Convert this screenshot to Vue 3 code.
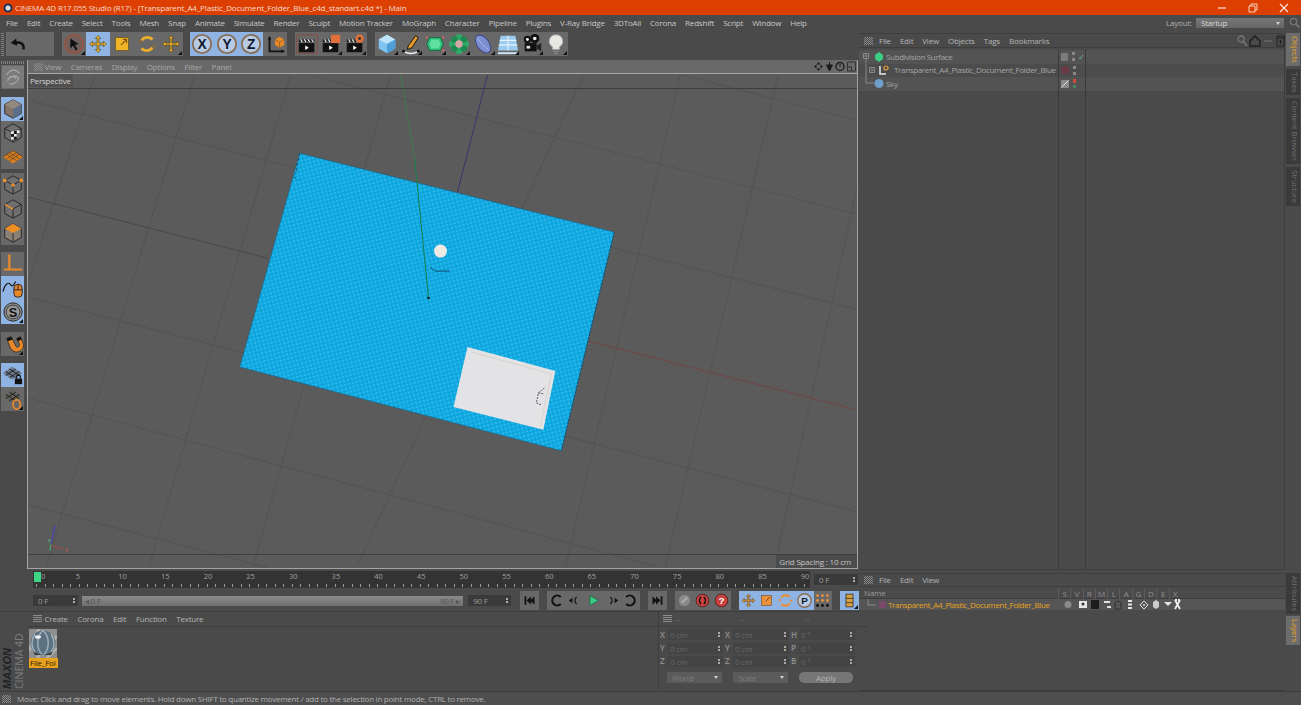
<script setup>
const menus = ['File', 'Edit', 'Create', 'Select', 'Tools', 'Mesh', 'Snap', 'Animate', 'Simulate', 'Render', 'Sculpt', 'Motion Tracker', 'MoGraph', 'Character', 'Pipeline', 'Plugins', 'V-Ray Bridge', '3DToAll', 'Corona', 'Redshift', 'Script', 'Window', 'Help']

const cross = '<path d="M12 3l3 3h-2v5h5V9l3 3-3 3v-2h-5v5h2l-3 3-3-3h2v-5H6v2l-3-3 3-3v2h5V6H9z" fill="#f0b429" stroke="#5a4a20" stroke-width=".8"/>'
const axisBtn = (l) => `<circle cx="12" cy="12" r="10" fill="#b7cbe6" stroke="#8a6f55" stroke-width="2"/><text x="12" y="17" text-anchor="middle" font-family="Liberation Sans" font-weight="700" font-size="15" fill="#10182c">${l}</text>`
const clap = (extra = '') => `<rect x="3" y="11" width="17" height="10" fill="#111"/><path d="M3 7h17v3H3z" fill="#222"/><path d="M5 7l2 3M9 7l2 3M13 7l2 3M17 7l2 3" stroke="#eee" stroke-width="1.2"/><path d="M10 13.5l4 2.5-4 2.5z" fill="#fff"/>${extra}`

const topGroups = [
  { tools: [
    { art: '<path d="M18 18c1-6-3-9-10-7" fill="none" stroke="#111" stroke-width="2.6"/><path d="M10 6l-6 5 7 3z" fill="#111"/>' },
    { art: '' }
  ] },
  { tools: [
    { art: '<circle cx="12" cy="12" r="10" fill="#6b6160" stroke="#a0503e" stroke-width="1.6"/><circle cx="12" cy="12" r="7.500" fill="none" stroke="#8a5a4c"/><path d="M8 6l9 6-4 1 3 5-2 1-3-5-3 3z" fill="#111"/>', corner: true },
    { art: cross, on: true },
    { art: '<rect x="5" y="5" width="14" height="14" fill="#f0b429" stroke="#6a5520" stroke-width=".8"/><path d="M11 13l6-6M13 7h4v4" stroke="#805a10" fill="none" stroke-width="1.4"/>' },
    { art: '<path d="M6 8a8 8 0 0 1 12-1M18 16a8 8 0 0 1-12 1" fill="none" stroke="#e8b028" stroke-width="3"/><path d="M4 12a8 8 0 0 1 1-5M20 12a8 8 0 0 1-1 5" fill="none" stroke="#8a6a30" stroke-width="1.4"/>' },
    { art: cross, corner: true }
  ] },
  { tools: [
    { art: axisBtn('X'), on: true },
    { art: axisBtn('Y'), on: true },
    { art: axisBtn('Z'), on: true },
    { art: '<path d="M6 6v14h14" fill="none" stroke="#111" stroke-width="2"/><path d="M6 3l2 4H4zM23 20l-4 2v-4z" fill="#111"/><path d="M12 7l5-3 5 3v6l-5 3-5-3z" fill="#e58a2a"/><path d="M12 7l5 3 5-3M17 10v6" stroke="#9a5512" fill="none" stroke-width=".8"/>' }
  ] },
  { tools: [
    { art: '<rect x="1" y="2" width="22" height="20" fill="none" stroke="#8a4a40"/>' + clap() },
    { art: clap('<rect x="12" y="2" width="10" height="9" fill="#e2703a"/>'), corner: true },
    { art: clap('<circle cx="17" cy="6" r="4.5" fill="#e2703a"/><circle cx="17" cy="6" r="1.6" fill="#333"/>'), corner: true }
  ] },
  { tools: [
    { art: '<path d="M12 2l9 5v10l-9 5-9-5V7z" fill="#7fc4f0"/><path d="M3 7l9 5 9-5-9-5z" fill="#bfe4fa"/><path d="M12 12v10l9-5V7z" fill="#4f9fdb"/>', corner: true },
    { art: '<path d="M4 20c5 3 11 3 16 0" fill="none" stroke="#eee" stroke-width="1.8"/><path d="M9 14l8-11 3 2-7 11-5 2z" fill="#e59a2a" stroke="#111" stroke-width="1"/><circle cx="4" cy="20" r="1.6" fill="#111"/><circle cx="20" cy="20" r="1.6" fill="#111"/>', corner: true },
    { art: '<path d="M6 5h12l3 7-3 7H6l-3-7z" fill="#2fc27a" stroke="#14613c"/><path d="M8 7h8l2 5-2 5H8l-2-5z" fill="#5fe0a0"/><circle cx="3" cy="5" r="1.2" fill="#e66"/><circle cx="21" cy="5" r="1.2" fill="#e66"/><circle cx="21" cy="19" r="1.2" fill="#e66"/>', corner: true },
    { art: '<circle cx="12" cy="5" r="4" fill="#32a868"/><circle cx="12" cy="19" r="4" fill="#32a868"/><circle cx="5" cy="12" r="4" fill="#32a868"/><circle cx="19" cy="12" r="4" fill="#32a868"/><circle cx="7" cy="7" r="3.5" fill="#1f8a50"/><circle cx="17" cy="7" r="3.5" fill="#1f8a50"/><circle cx="7" cy="17" r="3.5" fill="#1f8a50"/><circle cx="17" cy="17" r="3.5" fill="#1f8a50"/><circle cx="12" cy="12" r="4" fill="#d7a8a8"/>', corner: true },
    { art: '<ellipse cx="12" cy="12" rx="6.5" ry="11" transform="rotate(-35 12 12)" fill="#7d8fd0" stroke="#3a4784"/><path d="M6 5c3 6 7 10 13 14" fill="none" stroke="#aab6e6"/>', corner: true },
    { art: '<path d="M4 3h16l3 16H1z" fill="#9ccbf0"/><path d="M1 21h22v2H1z" fill="#cfe6fa"/><path d="M12 3v16M3 8h18M2 13h20" stroke="#e8f4fd" stroke-width="1.2"/>', corner: true },
    { art: '<rect x="4" y="11" width="13" height="9" fill="#111"/><path d="M17 14l5-3v9l-5-3z" fill="#222"/><circle cx="7" cy="7" r="4" fill="#111"/><circle cx="15" cy="6" r="5" fill="#111"/><circle cx="7" cy="7" r="1.6" fill="#eee"/><circle cx="15" cy="6" r="2" fill="#eee"/><rect x="6" y="14" width="4" height="3" fill="#ddd"/>', corner: true },
    { art: '<path d="M12 2a7 7 0 0 1 4 13v3H8v-3A7 7 0 0 1 12 2z" fill="#e8e8e2" stroke="#999"/><path d="M9 19h6v1.5H9zM10 21.5h4V23h-4z" fill="#888"/>', corner: true }
  ] }
]

const greyCube = '<path d="M12 2l9 5v10l-9 5-9-5V7z" fill="#6f6f6f" stroke="#222"/><path d="M3 7l9 5 9-5M12 12v10" fill="none" stroke="#222"/>'
const sideGroups = [
  { gap: 0, tools: [{ art: '<rect x="0" y="0" width="24" height="24" fill="#7b7b7b"/><path d="M5 10c4-7 10-7 14-2M6 16c2-5 8-7 12-3-1 5-6 8-10 6M9 13c2-2 5-2 6 1" fill="none" stroke="#a8a8a8" stroke-width="1.3"/>' }] },
  { gap: 8, tools: [
    { art: '<path d="M12 2l9 5v10l-9 5-9-5V7z" fill="#857568" stroke="#222"/><path d="M3 7l9 5 9-5-9-5z" fill="#94897d"/><path d="M12 12v10l9-5V7z" fill="#5d6f88"/>', on: true, corner: true },
    { art: greyCube + '<path d="M10 10h3v3h-3zM13 13h3v3h-3zM10 16h3v3h-3zM16 9h3v3h-3z" fill="#eee"/><path d="M13 10h3v3h-3zM10 13h3v3h-3zM13 16h3v3h-3z" fill="#111"/>' },
    { art: '<path d="M1 12l11-7 11 7-11 7z" fill="#d97e20"/><path d="M5 9l11 7M8 7l11 7M12 5l11 7M19 9L8 16M16 7L5 14M12 5L1 12" stroke="#5c4020" stroke-width=".8"/>' }
  ] },
  { gap: 4, tools: [
    { art: greyCube + '<circle cx="3" cy="7" r="2" fill="#e8932e"/><circle cx="21" cy="7" r="2" fill="#e8932e"/><circle cx="12" cy="12" r="2" fill="#e8932e"/>' },
    { art: greyCube + '<path d="M3 7l9 5" stroke="#e8932e" stroke-width="1.6"/>' },
    { art: '<path d="M12 2l9 5v10l-9 5-9-5V7z" fill="#8a8074" stroke="#222"/><path d="M3 7l9 5 9-5-9-5z" fill="#ee8f24"/><path d="M12 12v10" stroke="#222"/>' }
  ] },
  { gap: 7, tools: [
    { art: '<path d="M8 2v16h14M2 18h6" fill="none" stroke="#e8882a" stroke-width="2.4"/><path d="M8 1l2 3H6z" fill="#e8882a"/>' },
    { art: '<rect x="13" y="8" width="9" height="14" rx="4" fill="#e8882a" stroke="#222"/><path d="M17.5 8v6M13 14h9" stroke="#222"/><path d="M1 16C3 8 7 5 9 8s3 2 6-3" fill="none" stroke="#111" stroke-width="1.2"/>', on: true },
    { art: '<circle cx="12" cy="12" r="10" fill="#8b8b8b" stroke="#222"/><circle cx="12" cy="12" r="7.5" fill="#9a9a9a" stroke="#333"/><text x="12" y="17" text-anchor="middle" font-family="Liberation Sans" font-weight="700" font-size="14" fill="#111">S</text>', on: true, corner: true }
  ] },
  { gap: 8, tools: [{ art: '<path d="M5 6l5-2 5 10c1 3 5 1 4-2l-3-6 4-2 3 7c3 9-10 14-14 5z" fill="#e8882a" stroke="#222" stroke-width=".8"/><path d="M5 6l5-2 1.500 3-5 2zM16 6l4-2 1.300 3-4 2z" fill="#111"/>', corner: true }] },
  { gap: 7, tools: [
    { art: '<path d="M1 10l10-7 11 7-11 7z" fill="#6f7a8e"/><path d="M4 8l11 7M8 5.500l11 7M15 5.500L4 12.500M19 8L8 15" stroke="#111" stroke-width=".9"/><rect x="14" y="16" width="8" height="6" fill="#111"/><path d="M16 16v-2a2 2 0 0 1 4 0v2" fill="none" stroke="#111" stroke-width="1.4"/>', on: true },
    { art: '<path d="M1 9l10-7 11 7-11 7z" fill="#65625c"/><path d="M4 7l11 7M8 4.500l11 7M15 4.500L4 11.500M19 7L8 14" stroke="#111" stroke-width=".9"/><ellipse cx="16" cy="18" rx="4" ry="5" fill="none" stroke="#e8882a" stroke-width="2"/>', corner: true }
  ] }
]

const rulerLabels = Array.from({ length: 19 }, (_, i) => i * 5)

const transport = [
  { tools: [{ art: '<path d="M5 6h2.500v12H5zM19 6v12l-6-6zM14 6v12l-6-6z" fill="#111"/>' }] },
  { tools: [
    { art: '<path d="M18 7a7 7 0 1 0 0 10" fill="none" stroke="#111" stroke-width="3"/>' },
    { art: '<path d="M9 8v8l-5-4z" fill="#111"/><path d="M15 7c-3 3-3 7 0 10" fill="none" stroke="#111" stroke-width="1.600"/>' },
    { art: '<path d="M7 5l12 7-12 7z" fill="#38c983" stroke="#14613c"/>' },
    { art: '<path d="M15 8v8l5-4z" fill="#111"/><path d="M9 7c3 3 3 7 0 10" fill="none" stroke="#111" stroke-width="1.600"/>' },
    { art: '<path d="M6 7a7 7 0 1 1 0 10" fill="none" stroke="#111" stroke-width="3"/>' }
  ] },
  { tools: [{ art: '<path d="M19 6h-2.500v12H19zM5 6v12l6-6zM10 6v12l6-6z" fill="#111"/>' }] },
  { tools: [
    { art: '<circle cx="12" cy="12" r="8" fill="#8a8a8a"/><path d="M8 15l8-7" stroke="#aaa" stroke-width="3"/>' },
    { art: '<circle cx="12" cy="12" r="9" fill="#c8413f" stroke="#401010"/><path d="M10 7c-3 3-3 7 0 10M14 7c3 3 3 7 0 10" fill="none" stroke="#111" stroke-width="2"/>' },
    { art: '<circle cx="12" cy="12" r="9" fill="#c8413f" stroke="#401010"/><text x="12" y="17" text-anchor="middle" font-family="Liberation Sans" font-weight="700" font-size="14" fill="#fff">?</text>' }
  ] },
  { tools: [
    { art: cross.replaceAll('#f0b429', '#e8903a'), on: true },
    { art: '<rect x="5" y="5" width="14" height="14" fill="#e8903a" stroke="#6a4520" stroke-width=".8"/><path d="M11 13l6-6" stroke="#7a4a10" stroke-width="1.400"/>', on: true },
    { art: '<path d="M6 8a8 8 0 0 1 12-1M18 16a8 8 0 0 1-12 1M4 13a8 8 0 0 1 0-3M20 11a8 8 0 0 1 0 3" fill="none" stroke="#e8903a" stroke-width="3"/>', on: true },
    { art: '<circle cx="12" cy="12" r="9.500" fill="#b7cbe6" stroke="#8a6f55" stroke-width="2"/><text x="12" y="17" text-anchor="middle" font-family="Liberation Sans" font-weight="700" font-size="14" fill="#10182c">P</text>', on: true },
    { art: '<g fill="#e8903a"><circle cx="5" cy="5" r="2"/><circle cx="12" cy="5" r="2"/><circle cx="19" cy="5" r="2"/><circle cx="5" cy="12" r="2"/><circle cx="12" cy="12" r="2"/><circle cx="19" cy="12" r="2"/></g><g fill="#111"><circle cx="5" cy="19" r="2"/><circle cx="12" cy="19" r="2"/><circle cx="19" cy="19" r="2"/></g>' }
  ] },
  { tools: [{ art: '<rect x="7" y="3" width="10" height="18" fill="#d9a040" stroke="#222"/><path d="M7 9h10M7 15h10" stroke="#222"/>', on: true, corner: true }] }
]

const coordRows = [
  { a: 'X', b: 'X', c: 'H', d: '0 °' },
  { a: 'Y', b: 'Y', c: 'P', d: '0 °' },
  { a: 'Z', b: 'Z', c: 'B', d: '0 °' }
]

const layerCols = ['S', 'V', 'R', 'M', 'L', 'A', 'G', 'D', 'E', 'X']

// floor grid in page coordinates
const gridLines = [
  'M310 75L857 214', 'M683 75L857 120', 'M27 100L860 310', 'M27 297L857 512', 'M27 398L657 567', 'M27 505L267 568',
  'M94 75L27 283', 'M194 75L45 568', 'M290 75L148 568', 'M390 75L252 568', 'M583 75L357 565', 'M680 75L565 568',
  'M778 75L665 568', 'M857 187L777 555'
]
</script>

<template>
  <div class="app">
    <header class="titlebar">
      <svg class="logo" viewBox="0 0 12 12"><circle cx="6" cy="6" r="5.500" fill="#27364f" /><circle cx="6" cy="6" r="3" fill="#d7dde6" /></svg>
      <span class="title">CINEMA 4D R17.055 Studio (R17) - [Transparent_A4_Plastic_Document_Folder_Blue_c4d_standart.c4d *] - Main</span>
      <div class="winctl">
        <svg viewBox="0 0 10 10"><path d="M1 5h8" stroke="#f6d5c5" stroke-width="1.300" /></svg>
        <svg viewBox="0 0 10 10"><path d="M1 3h6v6H1zM3 3V1h6v6H7" fill="none" stroke="#f6d5c5" /></svg>
        <svg viewBox="0 0 10 10"><path d="M1 1l8 8M9 1l-8 8" stroke="#f6e5dc" stroke-width="1.200" /></svg>
      </div>
    </header>

    <nav class="menubar">
      <span v-for="m in menus" :key="m">{{ m }}</span>
      <div class="layout">
        <span>Layout:</span>
        <div class="layout-select">Startup<i class="caret"></i></div>
        <svg viewBox="0 0 12 12"><circle cx="5" cy="5" r="3.500" fill="none" stroke="#777" stroke-width="1.400" /><path d="M7.500 7.500l4 4" stroke="#777" stroke-width="2" /></svg>
      </div>
    </nav>

    <div class="main">
      <div class="left">
        <div class="toptools">
          <div v-for="(g, gi) in topGroups" :key="gi" class="group">
            <div v-for="(t, ti) in g.tools" :key="ti" class="tool" :class="{ on: t.on, corner: t.corner }">
              <svg viewBox="0 0 24 24" v-html="t.art"></svg>
            </div>
          </div>
        </div>

        <div class="work">
          <aside class="sidetools">
            <div v-for="(g, gi) in sideGroups" :key="gi" class="sgroup" :style="{ marginTop: g.gap + 'px' }">
              <div v-for="(t, ti) in g.tools" :key="ti" class="tool stool" :class="{ on: t.on, corner: t.corner }">
                <svg viewBox="0 0 24 24" v-html="t.art"></svg>
              </div>
            </div>
          </aside>

          <section class="viewport">
            <div class="vp-menu">
              <i class="dots"></i>
              <span>View</span><span>Cameras</span><span>Display</span><span>Options</span><span>Filter</span><span>Panel</span>
              <svg class="vp-nav" viewBox="0 0 44 11">
                <path d="M5.500 1l2 2.500h-4zM5.500 10l2-2.500h-4zM1 5.500l2.500-2v4zM10 5.500l-2.500-2v4z" fill="#1c1c1c" />
                <path d="M16.500 1v9M13.500 4h6l-3 6z" stroke="#1c1c1c" fill="#1c1c1c" />
                <circle cx="27" cy="5.500" r="4" fill="none" stroke="#1c1c1c" stroke-width="1.300" /><path d="M27 3v3" stroke="#1c1c1c" />
                <path d="M34.500 1h8v9h-8zM34.500 6h4v4" fill="none" stroke="#333" />
              </svg>
            </div>
            <div class="scene">
              <svg class="scene-svg" viewBox="27 74 830 494">
                <defs>
                  <pattern id="weave" width="4" height="4" patternUnits="userSpaceOnUse" patternTransform="rotate(-15)">
                    <rect width="4" height="4" fill="#0fa9e2" />
                    <circle cx="1" cy="1" r="0.900" fill="#3bbcea" />
                    <circle cx="3" cy="3" r="0.900" fill="#0b9fd8" />
                  </pattern>
                </defs>
                <path v-for="(d, i) in gridLines" :key="i" :d="d" class="gridline" />
                <path d="M27 197L267 258" class="axis-x" />
                <path d="M588 341L857 410" class="axis-red" />
                <path d="M400 75L414 158" class="axis-green" />
                <path d="M487 75L457 192" class="axis-blue" />
                <polygon points="299,153 614,232 561,451 239,367" fill="url(#weave)" stroke="#1b5f80" stroke-width="0.600" />
                <path d="M414 158L428 298" class="axis-green thin" />
                <circle cx="428" cy="298" r="1.200" fill="#111" />
                <path d="M430 267c2 3 6 5 10 4l9 0" fill="none" stroke="#154a6a" />
                <circle cx="440" cy="251" r="6.500" fill="#efe9e3" />
                <polygon points="467,347 555,371 543,430 453,407" fill="#e3e3e5" />
                <path d="M471 352L551 374L540 426" fill="none" stroke="#d8d2cc" />
                <path d="M544 388l-6 5l-2 10l5 2M538 393l5 1" fill="none" stroke="#3c3c58" stroke-width="0.800" stroke-dasharray="2 1" />
                <path d="M299 153l-4 21M293 177l5 3" stroke="#1c3a4a" fill="none" stroke-width="0.700" stroke-dasharray="3 2" />
                <path d="M614 232L561 451" stroke="#1b4a66" fill="none" stroke-dasharray="2 1.500" />
                <path d="M54 526L50 544" stroke="#4b45a8" stroke-width="1.400" />
                <path d="M50 544L49 551" stroke="#3fae68" stroke-width="1.200" />
                <path d="M50 546L62 549" stroke="#a24a44" stroke-width="1.200" />
                <text x="47" y="543" class="gizmo g">Y</text>
                <text x="64" y="552" class="gizmo r">X</text>
              </svg>
              <div class="persp"><span>Perspective</span></div>
              <div class="vp-foot"><span class="grid-spacing">Grid Spacing : 10 cm</span></div>
            </div>
          </section>
        </div>

        <div class="ruler">
          <i class="playhead"></i>
          <div class="ruler-track">
            <span v-for="n in rulerLabels" :key="n" class="rlabel">{{ n }}</span>
            <div class="ticks"></div>
          </div>
          <div class="field f-end">0 F<i class="spin"></i></div>
        </div>

        <div class="transport">
          <div class="field f-start">0 F<i class="spin"></i></div>
          <div class="slider"><span>◂ 0 F</span><span>90 F ▸</span></div>
          <div class="field f-stop">90 F<i class="spin"></i></div>
          <div class="tgroups">
            <div v-for="(g, gi) in transport" :key="gi" class="group tg">
              <div v-for="(t, ti) in g.tools" :key="ti" class="tool ttool" :class="{ on: t.on, corner: t.corner }">
                <svg viewBox="0 0 24 24" v-html="t.art"></svg>
              </div>
            </div>
          </div>
        </div>

        <div class="bottom">
          <div class="brand"><b>MAXON</b><span>CINEMA 4D</span></div>
          <div class="materials">
            <div class="pane-menu">
              <i class="lines"></i>
              <span>Create</span><span>Corona</span><span>Edit</span><span>Function</span><span>Texture</span>
            </div>
            <div class="mat">
              <svg viewBox="0 0 28 29">
                <rect width="28" height="29" fill="#8f8f8d" />
                <path d="M0 22l10-22M8 29l20-22M18 29l10-10" stroke="#b0b0ae" stroke-width="3" />
                <circle cx="14" cy="14" r="12.500" fill="#5d7280" />
                <path d="M14 1.500c-7 6-7 19 0 25M14 1.500c7 6 7 19 0 25M6 5c-4 6-4 13 0 18M22 5c4 6 4 13 0 18" fill="none" stroke="#9fb2bd" stroke-width="1.400" />
                <ellipse cx="9" cy="8" rx="3" ry="1.800" fill="#eef3f6" />
                <path d="M4 22c6 5 14 5 20 0l-2 4H6z" fill="#33393e" />
              </svg>
              <span class="mat-name">File_Fol</span>
            </div>
          </div>
          <div class="coords">
            <div class="coord-head"><i class="lines"></i><span>--</span><span>--</span><span>--</span></div>
            <div v-for="r in coordRows" :key="r.a" class="coord-row">
              <b>{{ r.a }}</b><div class="cf">0 cm<i class="spin"></i></div>
              <b>{{ r.b }}</b><div class="cf">0 cm<i class="spin"></i></div>
              <b>{{ r.c }}</b><div class="cf">{{ r.d }}<i class="spin"></i></div>
            </div>
            <div class="coord-actions">
              <div class="dd">World<i class="caret"></i></div>
              <div class="dd">Scale<i class="caret"></i></div>
              <div class="apply">Apply</div>
            </div>
          </div>
        </div>
      </div>

      <div class="right">
        <div class="obj-panel">
          <div class="pane-menu obj-menu">
            <i class="dots"></i>
            <span>File</span><span>Edit</span><span>View</span><span>Objects</span><span>Tags</span><span>Bookmarks</span>
            <svg class="obj-nav" viewBox="0 0 48 12">
              <circle cx="4" cy="4" r="3" fill="none" stroke="#777" stroke-width="1.300" /><path d="M6 6l4 5" stroke="#777" stroke-width="1.600" />
              <path d="M13 6l5-5 5 5v5h-10z" fill="none" stroke="#222" stroke-width="1.600" />
              <path d="M27 6h8" stroke="#666" stroke-width="1.500" />
              <path d="M40 1h7v10h-7zM40 3h7M43.500 5v4M42 7h3" fill="none" stroke="#222" />
            </svg>
          </div>
          <div class="obj-row">
            <div class="oname">
              <svg class="tree" viewBox="0 0 24 13"><path d="M3.500 3.500h5v5h-5zM4.500 6h3M6 4.500v3" fill="none" stroke="#8a8a8a" /><path d="M6 9v4" stroke="#8a8a8a" /><path d="M19 2l4 3v4l-4 3-4-3V5z" fill="#3bcf86" /></svg>
              <span>Subdivision Surface</span>
            </div>
            <div class="oflags"><i class="chip"></i><i class="vdots"></i><em>✓</em></div>
            <div class="otags"></div>
          </div>
          <div class="obj-row alt">
            <div class="oname">
              <svg class="tree wide" viewBox="0 0 32 13"><path d="M6 0v13" stroke="#8a8a8a" /><path d="M9.500 3.500h5v5h-5zM10.500 6h3M12 4.500v3" fill="none" stroke="#8a8a8a" /><path d="M20 2v8h6" fill="none" stroke="#e8e8e8" stroke-width="1.500" /><circle cx="26" cy="4" r="2" fill="none" stroke="#e8a040" stroke-width="1.200" /></svg>
              <span>Transparent_A4_Plastic_Document_Folder_Blue</span>
            </div>
            <div class="oflags"><i class="chip red"></i><i class="vdots"></i></div>
            <div class="otags"></div>
          </div>
          <div class="obj-row">
            <div class="oname">
              <svg class="tree" viewBox="0 0 24 13"><path d="M6 0v6h8" fill="none" stroke="#8a8a8a" /><circle cx="19" cy="6.500" r="4.500" fill="#6f9fc8" /></svg>
              <span>Sky</span>
            </div>
            <div class="oflags"><i class="chip slash"></i><i class="vdots redtop"></i></div>
            <div class="otags"></div>
          </div>
          <div class="obj-fill"><div></div><div></div><div></div></div>
        </div>

        <div class="layer-panel">
          <div class="pane-menu layer-menu">
            <i class="dots"></i>
            <span>File</span><span>Edit</span><span>View</span>
          </div>
          <div class="layer-head">
            <span class="lname">Name</span>
            <span v-for="c in layerCols" :key="c" class="lcol">{{ c }}</span>
          </div>
          <div class="layer-row">
            <div class="lname ltext">
              <svg viewBox="0 0 24 11"><path d="M4 0v6h8" fill="none" stroke="#8a8a8a" /><rect x="15" y="2" width="7" height="7" fill="#7b4a6a" /></svg>
              <span>Transparent_A4_Plastic_Document_Folder_Blue</span>
            </div>
            <svg class="layer-icons" viewBox="0 0 120 11">
              <circle cx="7" cy="5.500" r="3.500" fill="#8a8a8a" />
              <rect x="18" y="2" width="8" height="7" fill="#e8e8e8" /><circle cx="22" cy="5" r="1.500" fill="#333" />
              <rect x="30" y="1" width="8" height="9" fill="#1c1c1c" />
              <path d="M43 3h6M46 8h4" stroke="#e0e0e0" stroke-width="2" />
              <path d="M54 10V5a3 3 0 0 1 6 0v5z" fill="none" stroke="#333" />
              <path d="M67 1h4v2h-4zM67 4.500h4v2h-4zM67 8h4v2h-4z" fill="#e4e4e4" />
              <path d="M79 6l4-4 4 4-4 4z" fill="none" stroke="#ddd" /><circle cx="83" cy="6" r="1" fill="#ddd" />
              <path d="M92 3l3-2 3 2v5l-3 2-3-2z" fill="#ccc" />
              <path d="M103 3h8l-4 4z" fill="#e4e4e4" />
              <path d="M114 1l5 9M119 1l-5 9M114 1h2M117 1h2" stroke="#eee" stroke-width="1.800" fill="none" />
            </svg>
          </div>
        </div>
      </div>

      <div class="tabs">
        <div class="tabs-top">
          <span class="tab active">Objects</span>
          <span class="tab">Takes</span>
          <span class="tab">Content Browser</span>
          <span class="tab">Structure</span>
        </div>
        <div class="tabs-bottom">
          <span class="tab">Attributes</span>
          <span class="tab active">Layers</span>
        </div>
      </div>
    </div>

    <footer class="status">
      <i class="dots"></i>
      <span>Move: Click and drag to move elements. Hold down SHIFT to quantize movement / add to the selection in point mode, CTRL to remove.</span>
    </footer>
  </div>
</template>

<style scoped>
.app {
  width: 1301px;
  height: 705px;
  overflow: hidden;
  display: flex;
  flex-direction: column;
  background: #4a4a4a;
  color: #c4c4c4;
  font-family: "Open Sans", "Liberation Sans", sans-serif;
  font-size: 8px;
  line-height: 1;
  letter-spacing: -0.2px;
}

.titlebar {
  height: 15px;
  flex: none;
  background: #dd3f00;
  color: #f4dccf;
  display: flex;
  align-items: center;
  padding-left: 3px;
  gap: 2px;
}
.logo { width: 10px; height: 10px; }
.title { font-size: 8px; letter-spacing: -0.16px; white-space: nowrap; }
.winctl { margin-left: auto; display: flex; gap: 21px; padding-right: 12px; }
.winctl svg { width: 10px; height: 10px; }

.menubar {
  height: 15px;
  flex: none;
  display: flex;
  align-items: center;
  gap: 9px;
  padding-left: 6px;
  color: #c8c8c8;
  white-space: nowrap;
}
.layout { margin-left: auto; display: flex; align-items: center; gap: 4px; color: #b0b0b0; }
.layout svg { width: 11px; height: 11px; margin: 0 1px 0 1px; }
.layout-select {
  width: 88px;
  height: 10px;
  line-height: 10px;
  background: linear-gradient(#787878, #666);
  color: #d8d8d8;
  padding-left: 5px;
  box-sizing: border-box;
  position: relative;
}
.caret {
  position: absolute;
  right: 4px;
  top: 4px;
  border: 2.500px solid transparent;
  border-top: 3px solid #d0d0d0;
  border-bottom: 0;
}

.main { flex: 1; min-height: 0; display: flex; }
.left { width: 859px; flex: none; display: flex; flex-direction: column; }
.right { width: 426px; flex: none; padding-top: 3px; display: flex; flex-direction: column; gap: 3px; }

.toptools {
  height: 30px;
  flex: none;
  display: flex;
  padding: 2px 0 0 6px;
  box-sizing: border-box;
  gap: 7.500px;
  background: repeating-linear-gradient(#808080 0 1px, transparent 1px 2px) 1px 3px / 3px 24px no-repeat;
}
.group { display: flex; height: 24px; background: #686868; }
.tool { width: 24.200px; height: 24px; position: relative; display: flex; align-items: center; justify-content: center; box-sizing: border-box; }
.tool svg { width: 22px; height: 22px; display: block; }
.tool.on { background: #8fb3e2; }
.tool.corner::after {
  content: "";
  position: absolute;
  right: 1px;
  bottom: 1px;
  border: 2px solid transparent;
  border-right-color: #111;
  border-bottom-color: #111;
}

.work { height: 509px; flex: none; display: flex; }
.sidetools {
  width: 27px;
  flex: none;
  padding: 5px 0 0 1px;
  box-sizing: border-box;
  background: repeating-linear-gradient(90deg, #808080 0 1px, transparent 1px 2px) 1px 1px / 23px 3px no-repeat;
}
.sgroup { width: 23px; background: #686868; }
.stool { width: 23px; }

.viewport {
  flex: 1;
  border: solid #a4a4a4;
  border-width: 0 1px 1px 1px;
  display: flex;
  flex-direction: column;
  margin-right: 1px;
}
.vp-menu {
  height: 13px;
  flex: none;
  background: #696969;
  border-bottom: 1px solid #a9a9a9;
  display: flex;
  align-items: center;
  gap: 9.500px;
  color: #a8a8a8;
  padding-left: 6px;
}
.vp-menu .dots + span { margin-left: -8px; }
.vp-nav { width: 44px; height: 11px; margin-left: auto; }
.dots {
  width: 9px;
  height: 8px;
  flex: none;
  background: repeating-conic-gradient(#8a8a8a 0 25%, transparent 0 50%) 0 0 / 2px 2px;
}
.lines {
  width: 9px;
  height: 8px;
  flex: none;
  background: repeating-linear-gradient(#8c8c8c 0 1px, transparent 1px 2px);
}
.scene { flex: 1; position: relative; background: #5b5b5b; overflow: hidden; }
.scene-svg { position: absolute; inset: 0; width: 100%; height: 100%; }
.gridline { stroke: #525252; fill: none; stroke-width: 1; }
.axis-x { stroke: #484848; fill: none; }
.axis-red { stroke: #704444; fill: none; }
.axis-green { stroke: #3e7a4c; fill: none; }
.axis-green.thin { stroke: #128048; }
.axis-blue { stroke: #33336e; fill: none; }
.gizmo { font-size: 6px; font-family: "Open Sans", sans-serif; }
.gizmo.g { fill: #5fd08a; }
.gizmo.r { fill: #c8584f; }
.persp {
  position: absolute;
  left: 0;
  top: 0;
  right: 0;
  height: 14px;
  line-height: 13px;
  color: #d4d4d4;
  border-bottom: 1px solid #3c3c3c;
}
.persp span { display: inline-block; height: 13px; padding: 0 2px; background: #505050; }
.vp-foot {
  position: absolute;
  left: 0;
  right: 0;
  bottom: 0;
  height: 13px;
  border-top: 1px solid #3f3f3f;
  display: flex;
  justify-content: flex-end;
  align-items: center;
}
.grid-spacing { background: #4c4c4c; color: #c4c4c4; padding: 3px 6px 3px 3px; }

.ruler { height: 21px; flex: none; display: flex; align-items: center; padding-left: 33px; position: relative; }
.playhead { position: absolute; left: 34px; top: 3px; width: 7px; height: 10px; background: #3ed584; z-index: 1; }
.ruler-track {
  width: 777px;
  height: 17px;
  background: #333;
  display: flex;
  position: relative;
  box-sizing: border-box;
  color: #a0a0a0;
}
.rlabel { width: 42.660px; flex: none; padding: 2px 0 0 0; box-sizing: border-box; font-size: 7.500px; letter-spacing: 0; }
.rlabel:first-child { text-indent: 8px; }
.ticks {
  position: absolute;
  left: 3px;
  right: 0;
  bottom: 1px;
  height: 3px;
  background: repeating-linear-gradient(90deg, #9a9a9a 0 1px, transparent 1px 8.530px);
}
.field {
  height: 11px;
  line-height: 11px;
  background: #3a3a3a;
  color: #9a9a9a;
  padding-left: 5px;
  box-sizing: border-box;
  position: relative;
}
.spin {
  position: absolute;
  right: 3px;
  top: 3px;
  width: 2px;
  height: 5px;
  background: repeating-linear-gradient(#aaa 0 2px, transparent 2px 3px);
}
.f-end { width: 44px; margin-left: 4px; }
.transport { height: 21px; flex: none; display: flex; align-items: center; padding-left: 33px; }
.f-start { width: 45px; }
.slider {
  width: 383px;
  height: 10px;
  line-height: 10px;
  margin-left: 4px;
  background: linear-gradient(#8a8a8a, #6f6f6f);
  display: flex;
  justify-content: space-between;
  padding: 0 3px;
  box-sizing: border-box;
  color: #555;
}
.f-stop { width: 43px; margin-left: 5px; }
.tgroups { display: flex; margin-left: 9px; gap: 8px; }
.tg { height: 19px; }
.ttool { width: 18.700px; height: 19px; }
.ttool svg { width: 17px; height: 17px; }

.bottom { flex: 1; min-height: 0; display: flex; border-top: 1px solid #3e3e3e; }
.brand {
  width: 27px;
  flex: none;
  box-sizing: border-box;
  display: flex;
  flex-direction: column;
  writing-mode: vertical-rl;
  transform: rotate(180deg);
  align-items: flex-start;
  justify-content: center;
  gap: 1px;
  padding: 2px 0 0 0;
  color: #7e7e7e;
  font-size: 10.500px;
  letter-spacing: 0;
  white-space: nowrap;
}
.brand b { font-style: italic; font-family: "Liberation Sans", sans-serif; color: #1f1f1f; font-size: 11px; }
.materials { width: 631px; flex: none; display: flex; flex-direction: column; }
.pane-menu {
  height: 14px;
  flex: none;
  display: flex;
  align-items: center;
  gap: 9.500px;
  padding-left: 6px;
  border-bottom: 1px solid #3e3e3e;
  color: #b4b4b4;
}
.materials .lines + span { margin-left: -7px; }
.mat { width: 30px; margin: 2px 0 0 2px; }
.mat svg { width: 28px; height: 29px; display: block; }
.mat-name {
  display: block;
  width: 29px;
  height: 10px;
  line-height: 10px;
  background: #e8a11f;
  color: #2a1e00;
  padding-left: 1px;
  overflow: hidden;
  box-sizing: border-box;
}
.coords { flex: 1; border-left: 1px solid #3e3e3e; color: #6e6e6e; }
.coord-head {
  height: 14px;
  display: flex;
  align-items: center;
  padding-left: 4px;
  gap: 3px;
  border-bottom: 1px solid #3e3e3e;
  margin-bottom: 1px;
}
.coord-head span { width: 62px; }
.coord-row { display: grid; grid-template-columns: 6px 55px 6px 56px 6px 56px; column-gap: 2px; height: 13.400px; align-items: center; padding-left: 1px; }
.coord-row b { font-weight: 600; color: #909090; font-size: 8px; }
.cf { height: 11px; line-height: 11px; background: #444; padding-left: 2px; position: relative; color: #686868; }
.coord-actions { display: flex; align-items: center; gap: 11px; padding: 4px 0 0 8px; }
.dd { width: 55px; height: 11px; line-height: 11px; padding-left: 5px; box-sizing: border-box; background: #5b5b5b; color: #7d7d7d; position: relative; }
.apply { width: 54px; height: 11px; line-height: 11px; text-align: center; background: #767676; border-radius: 5px; color: #b4b4b4; }

.obj-panel { height: 537px; flex: none; display: flex; flex-direction: column; border-bottom: 1px solid #3e3e3e; border-right: 1px solid #3e3e3e; box-sizing: border-box; }
.obj-menu, .layer-menu { padding-left: 5px; gap: 9px; border-top: 1px solid #3e3e3e; box-sizing: border-box; }
.obj-menu { height: 15px; margin-bottom: 2px; }
.layer-menu { height: 14px; margin-bottom: 1px; }
.obj-menu .dots + span, .layer-menu .dots + span { margin-left: -3px; }
.obj-nav { width: 48px; height: 12px; margin-left: auto; margin-right: -1px; }
.obj-row { height: 13.500px; flex: none; display: grid; grid-template-columns: 200px 27px 1fr; background: #535353; }
.obj-row.alt { background: #4c4c4c; }
.oname { display: flex; align-items: center; color: #a4a4a4; border-right: 1px solid #3a3a3a; white-space: nowrap; overflow: hidden; letter-spacing: -0.33px; }
.tree { width: 24px; height: 13px; flex: none; margin-left: 1px; margin-right: 2px; }
.tree.wide { width: 32px; }
.oflags { display: flex; align-items: center; gap: 3px; padding-left: 2px; border-right: 1px solid #3a3a3a; }
.chip { width: 8px; height: 8px; background: #7c7c7c; border-radius: 1px; }
.chip.red { background: #6b3a44; border-radius: 50%; }
.chip.slash { background: linear-gradient(135deg, #8a8a8a 45%, #ddd 45% 55%, #8a8a8a 55%); }
.vdots { width: 3px; height: 9px; margin-left: 1px; background: linear-gradient(#888 0 3px, transparent 3px 6px, #888 6px 9px); }
.vdots.redtop { background: linear-gradient(#d04a3a 0 4px, transparent 4px 6px, #4a8a60 6px 9px); }
.oflags em { color: #5fc48a; font-style: normal; font-size: 8px; }
.obj-fill { flex: 1; display: grid; grid-template-columns: 200px 27px 1fr; }
.obj-fill div { border-right: 1px solid #3a3a3a; }
.obj-fill div:last-child { border-right: 0; }

.layer-panel { flex: 1; border-bottom: 1px solid #3e3e3e; }
.layer-head { height: 11px; display: flex; align-items: center; color: #9a9a9a; border-bottom: 1px solid #3e3e3e; box-sizing: border-box; }
.lname { width: 199px; flex: none; padding-left: 5px; box-sizing: border-box; }
.lcol { width: 12.300px; text-align: center; border-left: 1px solid #5c5c5c; color: #8f8f8f; height: 11px; line-height: 11px; box-sizing: border-box; }
.layer-row { height: 11px; display: flex; align-items: center; background: #555; }
.ltext { display: flex; align-items: center; padding-left: 5px; color: #e6a21f; white-space: nowrap; letter-spacing: -0.33px; }
.ltext svg { width: 24px; height: 11px; flex: none; margin-right: 0; }
.layer-icons { width: 120px; height: 11px; margin-left: 3px; }

.tabs { flex: 1; display: flex; flex-direction: column; padding: 3px 0 0 1px; }
.tabs-top { height: 540px; flex: none; display: flex; flex-direction: column; gap: 3px; }
.tabs-bottom { display: flex; flex-direction: column; gap: 2px; }
.tab {
  writing-mode: vertical-rl;
  background: #3a3a3a;
  color: #6f6f6f;
  padding: 3px 1px;
  text-align: center;
  white-space: nowrap;
  width: 14px;
  box-sizing: border-box;
}
.tab.active { background: #6c6c6c; color: #e8a11f; }

.status {
  height: 14px;
  flex: none;
  display: flex;
  align-items: center;
  gap: 6px;
  padding-left: 2px;
  background: #4e4e4e;
  border-top: 1px solid #3c3c3c;
  box-sizing: border-box;
  color: #b0b0b0;
  white-space: nowrap;
  letter-spacing: -0.25px;
}
</style>
